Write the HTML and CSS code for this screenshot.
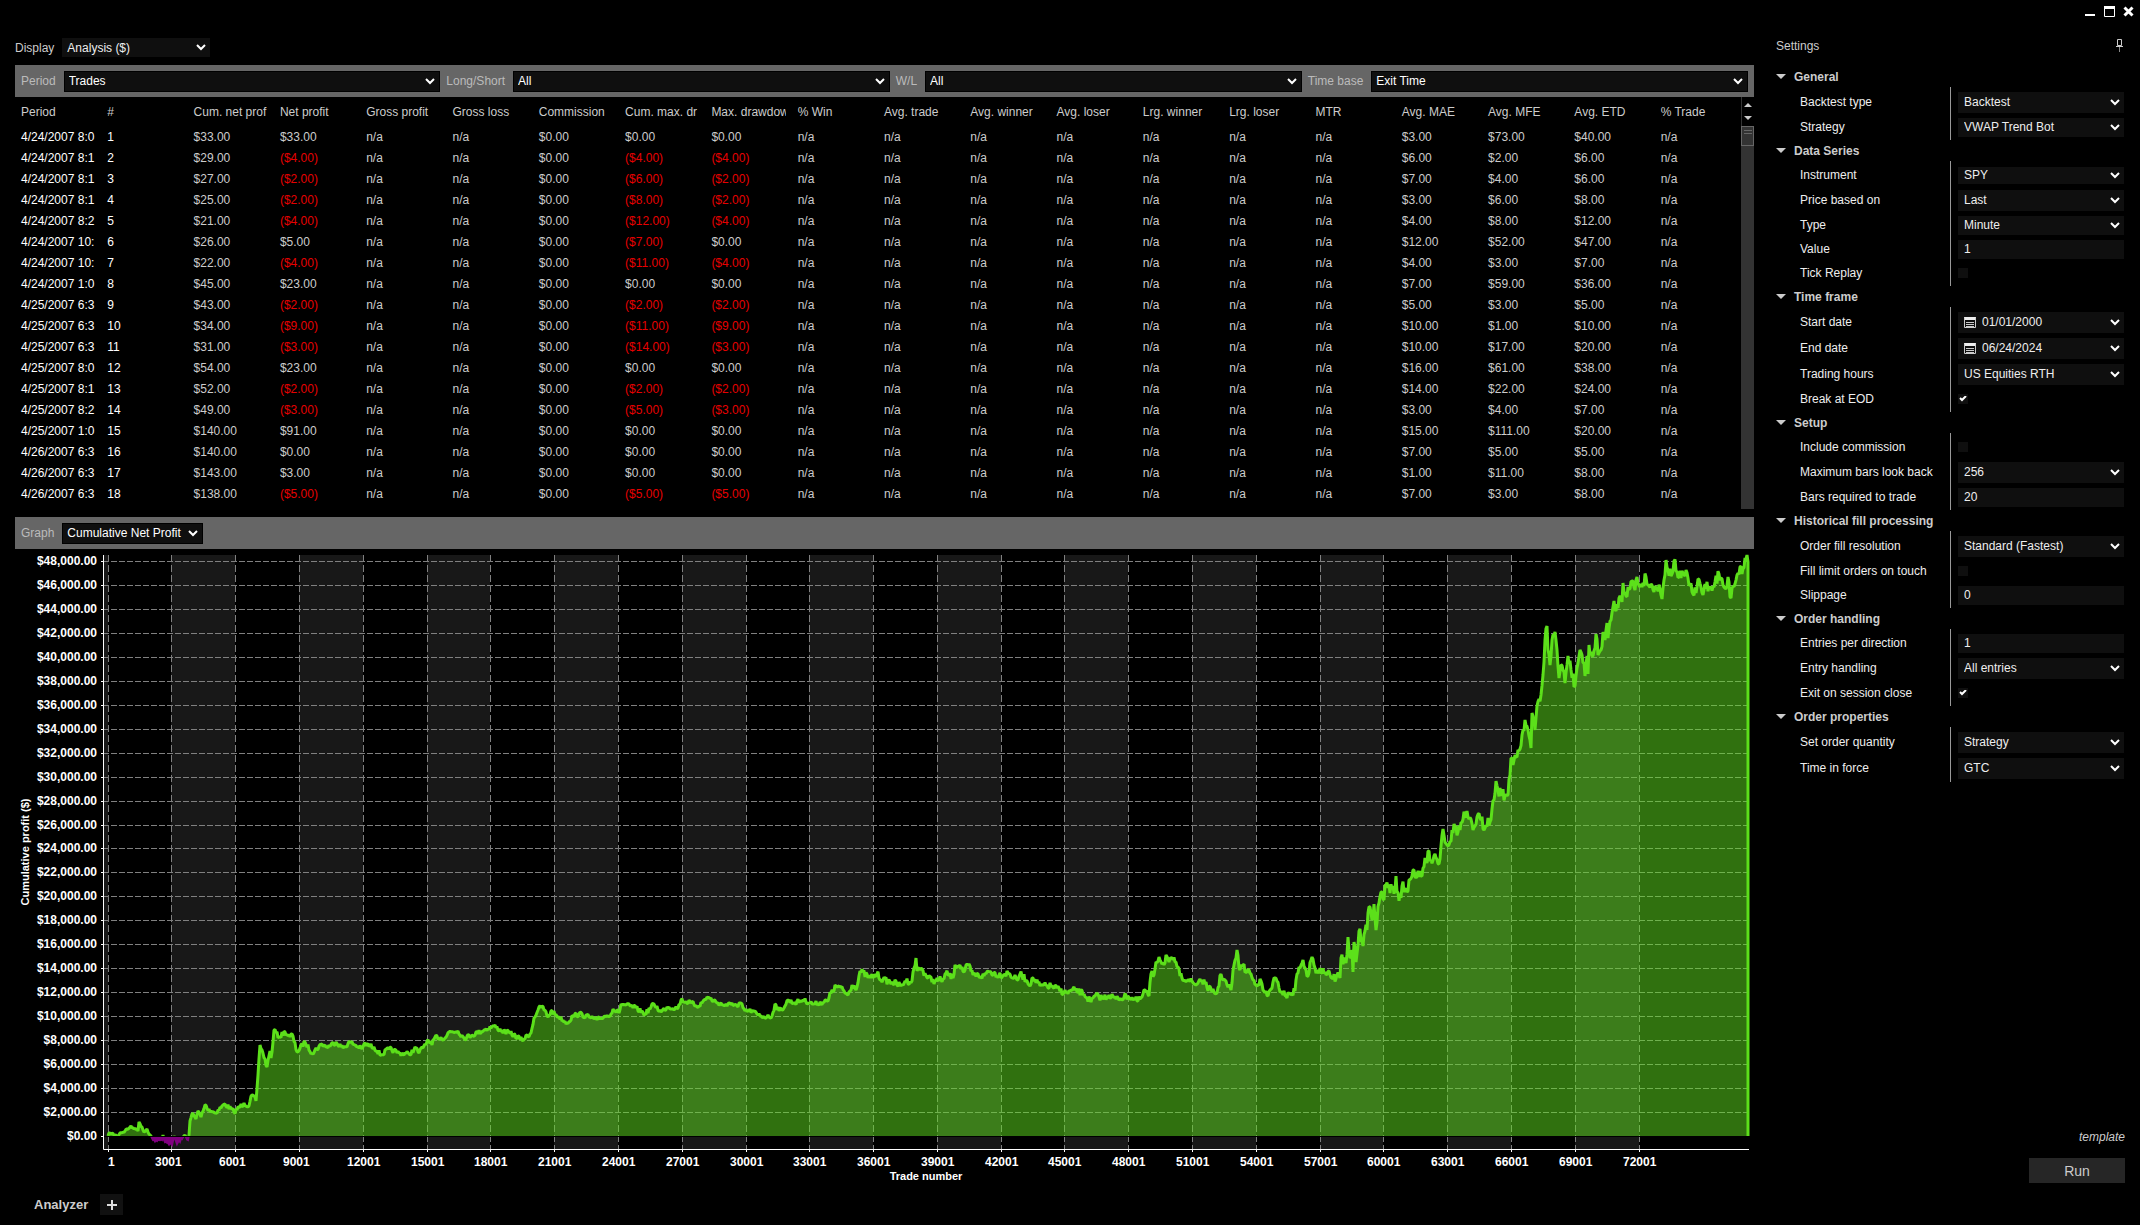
FILE: index.html
```html
<!DOCTYPE html>
<html lang="en">
<head>
<meta charset="utf-8">
<title>Strategy Analyzer</title>
<link rel="stylesheet" href="styles.css">
</head>
<body>
<header class="titlebar">
  <button class="win-btn" aria-label="Minimize"><svg width="11" height="11" viewBox="0 0 11 11"><path d="M0 8h10v2H0z" fill="#fff"/></svg></button>
  <button class="win-btn" aria-label="Maximize"><svg width="11" height="11" viewBox="0 0 11 11"><path d="M0 0h11v3H0z" fill="#fff"/><path d="M.5 1.5h10v9H.5z" fill="none" stroke="#fff"/></svg></button>
  <button class="win-btn" aria-label="Close"><svg width="11" height="11" viewBox="0 0 11 11"><path d="M1.5 1.5l8 8M9.5 1.5l-8 8" stroke="#fff" stroke-width="3"/></svg></button>
</header>
<div class="workspace">
  <main class="results">
    <div class="display-row">
      <label for="display">Display</label>
      <select id="display" class="field h19"><option>Analysis ($)</option></select>
    </div>
    <div class="bar filters">
      <label for="period">Period</label>
      <select id="period" class="field"><option>Trades</option></select>
      <label for="side">Long/Short</label>
      <select id="side" class="field"><option>All</option></select>
      <label for="wl">W/L</label>
      <select id="wl" class="field"><option>All</option></select>
      <label for="timebase">Time base</label>
      <select id="timebase" class="field"><option>Exit Time</option></select>
    </div>
    <div class="grid-view">
      <table class="trades">
        <thead>
          <tr>
            <th>Period</th><th>#</th><th>Cum. net prof</th><th>Net profit</th><th>Gross profit</th>
            <th>Gross loss</th><th>Commission</th><th>Cum. max. dr</th><th>Max. drawdow</th><th>% Win</th>
            <th>Avg. trade</th><th>Avg. winner</th><th>Avg. loser</th><th>Lrg. winner</th><th>Lrg. loser</th>
            <th>MTR</th><th>Avg. MAE</th><th>Avg. MFE</th><th>Avg. ETD</th><th>% Trade</th>
          </tr>
        </thead>
        <tbody id="rows"></tbody>
      </table>
      <div class="scroll">
        <div class="scroll-arrows">
          <svg width="8" height="4" viewBox="0 0 8 4"><path d="M4 0l4 4H0z" fill="#ccc"/></svg>
          <svg width="8" height="4" viewBox="0 0 8 4"><path d="M4 4L0 0h8z" fill="#ccc"/></svg>
        </div>
        <div class="scroll-track"><div class="scroll-thumb"></div></div>
      </div>
    </div>
    <div class="bar graph-bar">
      <label for="graph">Graph</label>
      <select id="graph" class="field"><option>Cumulative Net Profit</option></select>
    </div>
    <div class="chart" id="chart"></div>
    <nav class="tabs">
      <a href="#" class="tab">Analyzer</a>
      <button class="add-tab" aria-label="New tab"><svg width="10" height="10" viewBox="0 0 10 10"><path d="M5 0v10M0 5h10" stroke="#ddd" stroke-width="2"/></svg></button>
    </nav>
  </main>

  <aside class="settings">
    <div class="settings-head">
      <h2>Settings</h2>
      <button class="pin" aria-label="Pin panel"><svg width="7" height="14" viewBox="0 0 7 14"><path d="M1.5 .5h4v6h-4zM0 7.5h7" fill="none" stroke="#ccc"/><path d="M3.5 8v5" stroke="#888"/></svg></button>
    </div>

    <details open>
      <summary>General</summary>
      <div class="props">
        <div class="prop tall"><label for="s1">Backtest type</label><select id="s1" class="field"><option>Backtest</option></select></div>
        <div class="prop"><label for="s2">Strategy</label><select id="s2" class="field h19"><option>VWAP Trend Bot</option></select></div>
      </div>
    </details>

    <details open>
      <summary>Data Series</summary>
      <div class="props">
        <div class="prop"><label for="s3">Instrument</label><select id="s3" class="field h17"><option>SPY</option></select></div>
        <div class="prop tall"><label for="s4">Price based on</label><select id="s4" class="field"><option>Last</option></select></div>
        <div class="prop"><label for="s5">Type</label><select id="s5" class="field h19"><option>Minute</option></select></div>
        <div class="prop"><label for="s6">Value</label><input id="s6" class="field h19" type="text" value="1"></div>
        <div class="prop"><label for="s7">Tick Replay</label><input id="s7" type="checkbox"></div>
      </div>
    </details>

    <details open>
      <summary>Time frame</summary>
      <div class="props">
        <div class="prop tall"><label for="s8">Start date</label>
          <div class="date"><svg width="12" height="12" viewBox="0 0 12 12"><path d="M0 1h12v3H0z" fill="#eee"/><path d="M.5 1.5v10h11v-10M2 6.5h8M2 8.5h8M2 10.5h8" fill="none" stroke="#ccc"/></svg><input id="s8" type="text" value="01/01/2000"><button class="drop" aria-label="Open calendar"></button></div></div>
        <div class="prop tall"><label for="s9">End date</label>
          <div class="date"><svg width="12" height="12" viewBox="0 0 12 12"><path d="M0 1h12v3H0z" fill="#eee"/><path d="M.5 1.5v10h11v-10M2 6.5h8M2 8.5h8M2 10.5h8" fill="none" stroke="#ccc"/></svg><input id="s9" type="text" value="06/24/2024"><button class="drop" aria-label="Open calendar"></button></div></div>
        <div class="prop tall"><label for="s10">Trading hours</label><select id="s10" class="field"><option>US Equities RTH</option></select></div>
        <div class="prop"><label for="s11">Break at EOD</label><input id="s11" type="checkbox" checked></div>
      </div>
    </details>

    <details open>
      <summary>Setup</summary>
      <div class="props">
        <div class="prop"><label for="s12">Include commission</label><input id="s12" type="checkbox"></div>
        <div class="prop tall"><label for="s13">Maximum bars look back</label><select id="s13" class="field"><option>256</option></select></div>
        <div class="prop"><label for="s14">Bars required to trade</label><input id="s14" class="field h19" type="text" value="20"></div>
      </div>
    </details>

    <details open>
      <summary>Historical fill processing</summary>
      <div class="props">
        <div class="prop tall"><label for="s15">Order fill resolution</label><select id="s15" class="field"><option>Standard (Fastest)</option></select></div>
        <div class="prop"><label for="s16">Fill limit orders on touch</label><input id="s16" type="checkbox"></div>
        <div class="prop"><label for="s17">Slippage</label><input id="s17" class="field h19" type="text" value="0"></div>
      </div>
    </details>

    <details open>
      <summary>Order handling</summary>
      <div class="props">
        <div class="prop"><label for="s18">Entries per direction</label><input id="s18" class="field h19" type="text" value="1"></div>
        <div class="prop tall"><label for="s19">Entry handling</label><select id="s19" class="field"><option>All entries</option></select></div>
        <div class="prop"><label for="s20">Exit on session close</label><input id="s20" type="checkbox" checked></div>
      </div>
    </details>

    <details open>
      <summary>Order properties</summary>
      <div class="props">
        <div class="prop tall"><label for="s21">Set order quantity</label><select id="s21" class="field"><option>Strategy</option></select></div>
        <div class="prop tall"><label for="s22">Time in force</label><select id="s22" class="field"><option>GTC</option></select></div>
      </div>
    </details>

    <div class="run-area">
      <a href="#" class="template">template</a>
      <button class="run">Run</button>
    </div>
  </aside>
</div>
<script src="app.js"></script>
</body>
</html>
```
FILE: styles.css
```css
* { box-sizing: border-box; }

body {
  margin: 0;
  min-height: 100vh;
  display: flex;
  flex-direction: column;
  background: #000;
  color: #ccc;
  font: 12px/14px "Liberation Sans", Arial, sans-serif;
}

button, select, input { font: inherit; color: inherit; margin: 0; }
button { padding: 0; border: 0; background: none; }

.titlebar {
  display: flex;
  justify-content: flex-end;
  gap: 8px;
  height: 24px;
  padding: 6px 6px 0 0;
}
.win-btn { display: flex; width: 11px; height: 11px; }

.workspace { flex: 1; display: flex; }

.results {
  flex: 1;
  min-width: 0;
  display: flex;
  flex-direction: column;
  padding: 14px 0 10px 15px;
}

.field {
  appearance: none;
  height: 21px;
  padding: 0 18px 0 6px;
  border: 0;
  border-radius: 0;
  background-color: #0f0f0f;
  color: #eee;
  min-width: 0;
}
select.field, .drop {
  background-image: url('data:image/svg+xml,<svg xmlns="http://www.w3.org/2000/svg" width="10" height="7" viewBox="0 0 10 7"><path d="M1 1l4 4 4-4" fill="none" stroke="white" stroke-width="2"/></svg>');
  background-repeat: no-repeat;
  background-position: right 4px center;
}
.h19 { height: 19px; }
.h17 { height: 17px; }

.display-row { display: flex; align-items: center; gap: 8px; margin-bottom: 8px; }
.display-row .field { width: 148px; padding-left: 5px; }

.bar {
  height: 32px;
  background: #666;
  color: #bbb;
  padding: 0 6px;
  gap: 6px;
  align-items: center;
}
.bar label { padding-right: 2px; }
.bar .field { border: 1px solid #000; padding-left: 4px; color: #fff; }
.filters { display: grid; grid-template-columns: repeat(4, auto 1fr); }
.graph-bar { display: flex; margin-top: 8px; }
.graph-bar .field { width: 141px; }

.grid-view { display: flex; height: 412px; overflow: hidden; }
.trades {
  flex: 1;
  width: 100%;
  min-width: 0;
  table-layout: fixed;
  border-spacing: 0;
  align-self: flex-start;
}
.trades th, .trades td {
  height: 21px;
  padding: 0 0 0 6px;
  border-right: 6px solid transparent;
  overflow: hidden;
  white-space: nowrap;
  text-align: left;
  font-weight: normal;
}
.trades th { height: 29px; }
.trades td:nth-child(-n+2) { color: #fff; }
.trades .neg { color: #e60000; }

.scroll { flex: none; width: 13px; display: flex; flex-direction: column; }
.scroll-arrows {
  height: 29px;
  display: flex;
  flex-direction: column;
  align-items: center;
  justify-content: space-between;
  padding: 6px 0;
  border-left: 1px solid #333;
}
.scroll-track { flex: 1; background: #333; }
.scroll-thumb {
  height: 20px;
  border: 1px solid #666;
  background:
    linear-gradient(#666, #666) center 3px / 8px 1px no-repeat,
    linear-gradient(#666, #666) center 6px / 8px 1px no-repeat;
}

.chart { flex: 1; min-height: 480px; overflow: hidden; }
.chart svg { display: block; }
.chart text { fill: #fff; font-size: 12px; font-weight: bold; }
.chart .axis-title { font-size: 11px; }

.tabs { display: flex; align-items: center; gap: 12px; padding: 9px 0 0 19px; }
.tab { color: #ccc; font-size: 13px; font-weight: bold; text-decoration: none; }
.add-tab {
  width: 23px;
  height: 21px;
  display: flex;
  align-items: center;
  justify-content: center;
  background: #111;
}

.settings {
  flex: none;
  width: 386px;
  display: flex;
  flex-direction: column;
  padding: 14px 15px 42px 22px;
}
.settings-head {
  display: flex;
  justify-content: space-between;
  align-items: center;
  height: 15px;
  margin-bottom: 13px;
  padding-right: 2px;
}
.settings h2 { margin: 0; font-size: 12px; font-weight: normal; }
.pin { display: flex; }

summary {
  display: flex;
  align-items: center;
  height: 21px;
  gap: 8px;
  font-weight: bold;
}
summary::before {
  content: "";
  border: 5px solid transparent;
  border-top-color: #ccc;
  border-bottom: 0;
}
.props {
  margin: 0 1px 0 24px;
  padding: 2px 0 1px;
  background: linear-gradient(#999, #999) 150px 0 / 1px 100% no-repeat;
}
.prop {
  display: grid;
  grid-template-columns: 158px minmax(0, 1fr);
  align-items: center;
  height: 24px;
  color: #eee;
}
.prop.tall { height: 26px; }

.date {
  display: flex;
  align-items: center;
  gap: 6px;
  height: 21px;
  padding-left: 6px;
  background: #0f0f0f;
}
.date svg { flex: none; }
.date input { flex: 1; min-width: 0; border: 0; padding: 0; background: none; }
.drop { flex: none; width: 18px; height: 21px; }

input[type="checkbox"] {
  appearance: none;
  width: 10px;
  height: 10px;
  background: #0f0f0f;
}
input[type="checkbox"]:checked {
  background: #0f0f0f url('data:image/svg+xml,<svg xmlns="http://www.w3.org/2000/svg" width="8" height="6" viewBox="0 0 8 6"><path d="M1 2l2 2 4-4" fill="none" stroke="white" stroke-width="2"/></svg>') center no-repeat;
}

.run-area {
  margin-top: auto;
  display: flex;
  flex-direction: column;
  align-items: flex-end;
  gap: 14px;
}
.template { color: #ccc; font-style: italic; text-decoration: none; }
.run { width: 96px; height: 25px; background: #262626; font-size: 14px; }
```
FILE: app.js
```js
// Trade rows: period, cum. net profit, net profit, cum. max. drawdown, max. drawdown, MAE, MFE, ETD
const trades = [
  ['4/24/2007 8:0', 33, 33, 0, 0, 3, 73, 40],
  ['4/24/2007 8:1', 29, -4, -4, -4, 6, 2, 6],
  ['4/24/2007 8:1', 27, -2, -6, -2, 7, 4, 6],
  ['4/24/2007 8:1', 25, -2, -8, -2, 3, 6, 8],
  ['4/24/2007 8:2', 21, -4, -12, -4, 4, 8, 12],
  ['4/24/2007 10:', 26, 5, -7, 0, 12, 52, 47],
  ['4/24/2007 10:', 22, -4, -11, -4, 4, 3, 7],
  ['4/24/2007 1:0', 45, 23, 0, 0, 7, 59, 36],
  ['4/25/2007 6:3', 43, -2, -2, -2, 5, 3, 5],
  ['4/25/2007 6:3', 34, -9, -11, -9, 10, 1, 10],
  ['4/25/2007 6:3', 31, -3, -14, -3, 10, 17, 20],
  ['4/25/2007 8:0', 54, 23, 0, 0, 16, 61, 38],
  ['4/25/2007 8:1', 52, -2, -2, -2, 14, 22, 24],
  ['4/25/2007 8:2', 49, -3, -5, -3, 3, 4, 7],
  ['4/25/2007 1:0', 140, 91, 0, 0, 15, 111, 20],
  ['4/26/2007 6:3', 140, 0, 0, 0, 7, 5, 5],
  ['4/26/2007 6:3', 143, 3, 0, 0, 1, 11, 8],
  ['4/26/2007 6:3', 138, -5, -5, -5, 7, 3, 8]
];

const money = v => v < 0 ? `($${(-v).toFixed(2)})` : `$${v.toFixed(2)}`;
const cell = v => typeof v === 'number'
  ? `<td${v < 0 ? ' class="neg"' : ''}>${money(v)}</td>`
  : `<td>${v}</td>`;

document.getElementById('rows').innerHTML = trades.map((t, i) => {
  const na = 'n/a';
  const cols = [t[0], String(i + 1), t[1], t[2], na, na, 0, t[3], t[4],
    na, na, na, na, na, na, na, t[5], t[6], t[7], na];
  return `<tr>${cols.map(cell).join('')}</tr>`;
}).join('');

// Equity curve samples on a 1646 x 594 plot whose corner is at (103, 555)
const curve = `108,1136 110,1133 117,1136 120,1133 125,1131 130,1127 135,1128 138,1131 139,1122 142,1127 144,1132 147,1129 150,1135
152,1138 153,1140 157,1141 162,1140 163,1135 164,1140 168,1143 172,1145 174,1136 177,1144 178,1142 182,1139 185,1135 188,1140 189,1135
190,1121 192,1114 194,1116 196,1119 198,1111 201,1117 205,1105 207,1108 215,1113 225,1104 234,1112 244,1103 249,1106 252,1095 256,1101
258,1075 260,1045 262,1050 267,1067 270,1051 271,1058 273,1042 274,1030 279,1037 285,1032 290,1037 292,1034 297,1052 305,1042 312,1053
322,1044 327,1047 336,1042 343,1048 350,1042 362,1049 364,1044 374,1047 381,1055 389,1049 399,1053 409,1054 416,1048 419,1053 427,1041
432,1045 435,1037 445,1038 449,1032 458,1031 464,1038 472,1035 484,1030 494,1026 502,1031 510,1033 522,1040 531,1033 534,1018 538,1010
542,1006 548,1017 551,1011 559,1017 567,1023 573,1016 579,1014 589,1017 597,1020 605,1016 609,1016 613,1009 619,1013 621,1004 636,1008
645,1014 654,1004 661,1012 667,1007 678,1008 681,1000 691,1003 699,1006 707,997 716,1002 727,1006 732,1003 738,1007 740,1003 745,1011
752,1011 758,1015 767,1017 772,1016 775,1004 779,1011 785,1006 788,1000 794,1003 803,1000 814,1004 828,1001 832,990 838,986 848,995
852,985 857,987 860,971 870,978 877,974 883,980 892,982 901,986 905,981 912,981 914,968 916,958 917,971 921,968 928,978 935,981
944,979 946,973 953,978 955,965 960,965 964,972 968,965 973,975 984,976 988,971 999,975 1008,973 1017,980 1020,974 1031,984 1033,978
1040,986 1051,986 1066,993 1075,990 1084,994 1091,1002 1095,996 1104,998 1109,995 1116,999 1128,996 1138,1001 1142,997 1145,990
1149,996 1151,974 1154,975 1156,962 1159,957 1164,965 1166,955 1169,962 1173,960 1176,962 1180,976 1189,980 1196,985 1200,979
1205,984 1212,992 1217,993 1221,974 1227,985 1231,990 1234,965 1237,950 1239,968 1243,965 1246,972 1249,970 1253,980 1258,984
1261,981 1263,990 1268,996 1275,978 1279,988 1286,996 1295,991 1297,974 1299,967 1302,963 1305,968 1308,976 1311,960 1315,968
1320,968 1325,972 1329,971 1333,979 1337,975 1340,978 1341,958 1346,963 1348,937 1350,958 1352,950 1353,972 1354,942 1356,962
1359,931 1363,946 1365,931 1367,930 1368,913 1370,907 1372,920 1374,904 1376,930 1379,903 1381,892 1383,899 1386,885 1392,889
1395,890 1396,876 1397,892 1401,898 1402,886 1407,892 1409,880 1414,870 1417,877 1422,876 1425,858 1427,863 1429,851 1431,860
1435,854 1439,864 1441,846 1443,829 1447,845 1453,833 1454,824 1458,832 1465,815 1468,817 1473,830 1477,817 1481,820 1485,828
1488,818 1490,822 1492,809 1494,800 1496,781 1498,790 1502,792 1505,796 1508,795 1510,775 1511,758 1513,765 1515,755 1520,749
1522,735 1525,720 1528,730 1531,748 1532,713 1535,730 1537,706 1541,695 1543,675 1545,640 1547,626 1548,650 1550,665 1552,640
1555,632 1557,650 1559,678 1561,665 1563,670 1565,683 1568,656 1571,670 1575,686 1577,668 1580,650 1582,655 1585,676 1587,656
1588,674 1589,645 1592,656 1595,648 1596,634 1598,655 1601,650 1603,632 1605,640 1607,623 1608,638 1611,620 1613,607 1614,601
1616,611 1619,598 1622,602 1623,583 1626,596 1628,587 1632,581 1635,590 1637,577 1640,587 1646,577 1649,586 1655,586 1660,589
1662,599 1664,580 1666,560 1668,570 1672,574 1674,561 1677,572 1681,578 1683,573 1688,578 1693,594 1696,593 1698,579 1703,595
1705,584 1710,588 1715,582 1719,574 1723,585 1726,589 1728,577 1730,597 1733,586 1737,575 1740,567 1742,574 1745,558 1747,555 1748,562`
  .trim().split(/\s+/).map(p => p.split(',').map(Number));

// Fill in one point per step between samples, with a small repeatable jitter
function densify(points) {
  let seed = 7;
  const rand = () => (seed = (seed * 16807) % 2147483647) / 2147483647 - 0.5;
  const out = [];
  for (let i = 0; i < points.length - 1; i++) {
    const [x0, y0] = points[i];
    const [x1, y1] = points[i + 1];
    out.push([x0, y0]);
    const amp = x0 < 190 ? 3 : x0 < 820 ? 5 : x0 < 1300 ? 7 : 12;
    for (let x = x0 + 1; x < x1; x++) {
      out.push([x, y0 + (y1 - y0) * (x - x0) / (x1 - x0) + rand() * amp]);
    }
  }
  out.push(points[points.length - 1]);
  return out;
}
const dense = densify(curve);

function drawChart() {
  const host = document.getElementById('chart');
  host.innerHTML = '';
  const W = host.clientWidth;
  const H = host.clientHeight;
  const left = 88, top = 6, right = W - 5, bottom = H - 36;
  const kx = (right - left) / 1646;
  const ky = (bottom - top) / 594;
  const px = x => left + (x - 103) * kx;
  const py = y => top + (y - 555) * ky;
  const tradeX = k => Math.round(px(107.6 + 63.79 * k));
  const moneyY = v => Math.round(py(1136 - v / 2000 * 23.96));
  const zero = moneyY(0);
  const s = [];

  s.push(`<rect x="${left}" y="${top}" width="${tradeX(0) - left}" height="${bottom - top}" fill="#181818"/>`);
  for (let k = 1; k < 24; k += 2) {
    s.push(`<rect x="${tradeX(k)}" y="${top}" width="${tradeX(k + 1) - tradeX(k)}" height="${bottom - top}" fill="#181818"/>`);
  }
  for (let v = 2000; v <= 48000; v += 2000) {
    const y = moneyY(v) + 0.5;
    s.push(`<path d="M${left} ${y}H${right}" stroke="#808080" stroke-dasharray="6 2"/>`);
  }
  for (let k = 0; k <= 24; k++) {
    const x = tradeX(k) + 0.5;
    s.push(`<path d="M${x} ${top}V${bottom}" stroke="#808080" stroke-dasharray="7 3"/>`);
  }

  const pts = dense.map(([x, y]) => `${px(x).toFixed(1)} ${py(y).toFixed(1)}`).join('L');
  const end = px(1748).toFixed(1);
  s.push(`<clipPath id="gain"><rect x="${left}" y="0" width="${W - left}" height="${zero}"/></clipPath>`);
  s.push(`<clipPath id="loss"><rect x="${left}" y="${zero}" width="${W - left}" height="${bottom - zero}"/></clipPath>`);
  s.push(`<g clip-path="url(#gain)"><path d="M${px(108)} ${zero}L${pts}L${end} ${zero}z" fill="#60e21e" fill-opacity="0.5"/>`);
  s.push(`<path d="M${pts}L${end} ${zero}" fill="none" stroke="#5ce01a" stroke-width="3" stroke-linejoin="bevel"/></g>`);
  s.push(`<path clip-path="url(#loss)" d="M${px(108)} ${zero}L${pts}L${end} ${zero}z" fill="#800080" stroke="#800080" stroke-width="2"/>`);
  s.push(`<path d="M${left} ${zero + 0.5}H${right}" stroke="#000"/>`);

  s.push(`<path d="M${left + 0.5} ${top}V${bottom + 0.5}H${right}" fill="none" stroke="#fff"/>`);
  for (let v = 0; v <= 48000; v += 2000) {
    const y = moneyY(v);
    s.push(`<path d="M${left - 2} ${y + 0.5}h2" stroke="#fff"/>`);
    s.push(`<text x="${left - 6}" y="${y + 4}" text-anchor="end">$${v.toLocaleString('en-US')}.00</text>`);
  }
  for (let k = 0; k <= 24; k++) {
    const x = tradeX(k);
    s.push(`<path d="M${x + 0.5} ${bottom}v3" stroke="#fff"/>`);
    s.push(`<text x="${k ? x - 16 : x}" y="${bottom + 17}">${k * 3000 + 1}</text>`);
  }
  const mid = (left + right) / 2;
  s.push(`<text class="axis-title" x="${mid}" y="${bottom + 31}" text-anchor="middle">Trade number</text>`);
  const my = (top + bottom) / 2;
  s.push(`<text class="axis-title" transform="translate(14 ${my}) rotate(-90)" text-anchor="middle">Cumulative profit ($)</text>`);
  host.innerHTML = `<svg width="${W}" height="${H}" role="img" aria-label="Cumulative net profit by trade number">${s.join('')}</svg>`;
}
drawChart();
window.addEventListener('resize', drawChart);
```
